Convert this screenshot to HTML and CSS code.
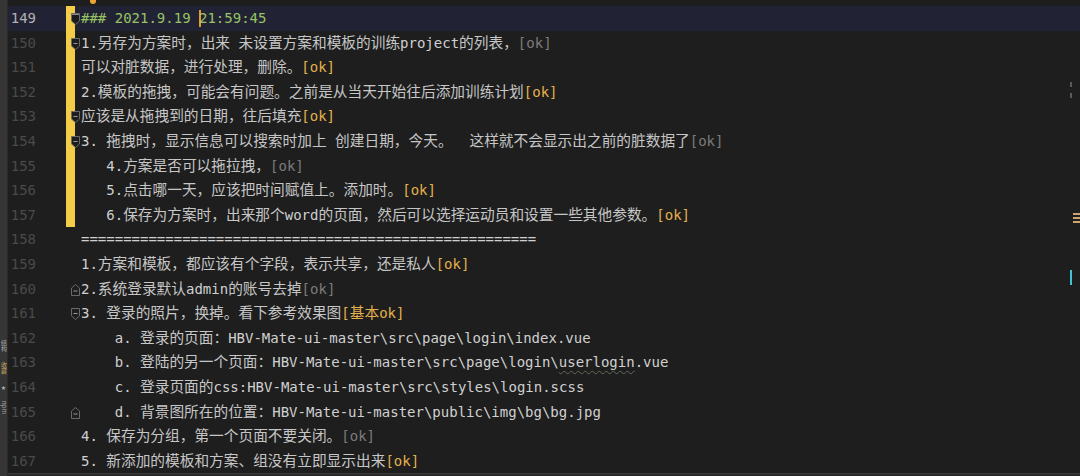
FILE: index.html
```html
<!DOCTYPE html>
<html>
<head>
<meta charset="utf-8">
<link rel="stylesheet" href="styles.css">
</head>
<body>
<div class="app">
  <div class="strip">
    <span class="tw">结构</span>
    <span class="tw fav">收藏</span>
    <span class="star">★</span>
    <span class="tw">npm</span>
  </div>
  <div class="editor">
    <div class="top"><span class="bulb"></span></div>
    <div class="row cur chg"><span class="num">149</span><span class="gut"><svg class="fd" viewBox="0 0 9 12"><path d="M0.5 0.5H8.5V8L4.5 11.5L0.5 8Z" fill="#1c1c1c" stroke="#6a6a6a"/><path d="M1 1.5H8" stroke="#8a8a8a"/></svg></span><span class="txt h">### 2021.9.19 <i class="caret"></i>21:59:45</span></div>
    <div class="row chg"><span class="num">150</span><span class="gut"><svg class="fd" viewBox="0 0 9 12"><path d="M0.5 0.5H8.5V8L4.5 11.5L0.5 8Z" fill="#1e1e1e" stroke="#6a6a6a"/><path d="M2.5 5.5H6.5" stroke="#9a9a9a"/></svg></span><span class="txt">1.<span class="z">另存为方案时，出来</span> <span class="z">未设置方案和模板的训练</span>project<span class="z">的列表，</span><span class="g">[ok]</span></span></div>
    <div class="row chg"><span class="num">151</span><span class="gut"></span><span class="txt"><span class="z">可以对脏数据，进行处理，删除。</span><span class="y">[ok]</span></span></div>
    <div class="row chg"><span class="num">152</span><span class="gut"></span><span class="txt">2.<span class="z">模板的拖拽，可能会有问题。之前是从当天开始往后添加训练计划</span><span class="y">[ok]</span></span></div>
    <div class="row chg"><span class="num">153</span><span class="gut"><svg class="fd" viewBox="0 0 9 12"><path d="M0.5 0.5H8.5V8L4.5 11.5L0.5 8Z" fill="#1e1e1e" stroke="#6a6a6a"/><path d="M2.5 5.5H6.5" stroke="#9a9a9a"/></svg></span><span class="txt"><span class="z">应该是从拖拽到的日期，往后填充</span><span class="y">[ok]</span></span></div>
    <div class="row chg"><span class="num">154</span><span class="gut"><svg class="fd" viewBox="0 0 9 12"><path d="M0.5 0.5H8.5V8L4.5 11.5L0.5 8Z" fill="#1e1e1e" stroke="#6a6a6a"/><path d="M2.5 5.5H6.5" stroke="#9a9a9a"/></svg></span><span class="txt">3. <span class="z">拖拽时，显示信息可以搜索时加上</span> <span class="z">创建日期，今天。</span>  <span class="z">这样就不会显示出之前的脏数据了</span><span class="g">[ok]</span></span></div>
    <div class="row chg"><span class="num">155</span><span class="gut"></span><span class="txt">   4.<span class="z">方案是否可以拖拉拽，</span><span class="g">[ok]</span></span></div>
    <div class="row chg"><span class="num">156</span><span class="gut"></span><span class="txt">   5.<span class="z">点击哪一天，应该把时间赋值上。添加时。</span><span class="y">[ok]</span></span></div>
    <div class="row chg"><span class="num">157</span><span class="gut"></span><span class="txt">   6.<span class="z">保存为方案时，出来那个</span>word<span class="z">的页面，然后可以选择运动员和设置一些其他参数。</span><span class="y">[ok]</span></span></div>
    <div class="row"><span class="num">158</span><span class="gut"></span><span class="txt">======================================================</span></div>
    <div class="row"><span class="num">159</span><span class="gut"></span><span class="txt">1.<span class="z">方案和模板，都应该有个字段，表示共享，还是私人</span><span class="y">[ok]</span></span></div>
    <div class="row"><span class="num">160</span><span class="gut"><svg class="fd" viewBox="0 0 9 12"><path d="M0.5 11.5H8.5V4L4.5 0.5L0.5 4Z" fill="#1e1e1e" stroke="#6a6a6a"/><path d="M2.5 7H6.5" stroke="#9a9a9a"/></svg></span><span class="txt">2.<span class="z">系统登录默认</span>admin<span class="z">的账号去掉</span><span class="g">[ok]</span></span></div>
    <div class="row"><span class="num">161</span><span class="gut"><svg class="fd" viewBox="0 0 9 12"><path d="M0.5 0.5H8.5V8L4.5 11.5L0.5 8Z" fill="#1e1e1e" stroke="#6a6a6a"/><path d="M2.5 5.5H6.5" stroke="#9a9a9a"/></svg></span><span class="txt">3. <span class="z">登录的照片，换掉。看下参考效果图</span><span class="y">[<span class="z">基本</span>ok]</span></span></div>
    <div class="row"><span class="num">162</span><span class="gut"></span><span class="txt">    a. <span class="z">登录的页面：</span>HBV-Mate-ui-master\src\page\login\index.vue</span></div>
    <div class="row"><span class="num">163</span><span class="gut"></span><span class="txt">    b. <span class="z">登陆的另一个页面：</span>HBV-Mate-ui-master\src\page\login\<span class="sp">userlogin</span>.vue</span></div>
    <div class="row"><span class="num">164</span><span class="gut"></span><span class="txt">    c. <span class="z">登录页面的</span>css:HBV-Mate-ui-master\src\styles\login.scss</span></div>
    <div class="row"><span class="num">165</span><span class="gut"><svg class="fd" viewBox="0 0 9 12"><path d="M0.5 11.5H8.5V4L4.5 0.5L0.5 4Z" fill="#1e1e1e" stroke="#6a6a6a"/><path d="M2.5 7H6.5" stroke="#9a9a9a"/></svg></span><span class="txt">    d. <span class="z">背景图所在的位置：</span>HBV-Mate-ui-master\public\img\bg\bg.jpg</span></div>
    <div class="row"><span class="num">166</span><span class="gut"></span><span class="txt">4. <span class="z">保存为分组，第一个页面不要关闭。</span><span class="g">[ok]</span></span></div>
    <div class="row"><span class="num">167</span><span class="gut"></span><span class="txt">5. <span class="z">新添加的模板和方案、组没有立即显示出来</span><span class="y">[ok]</span></span></div>
    <div class="foot"></div>
    <span class="mk m1"></span>
    <span class="mk m2"></span>
    <span class="tan"><i></i><i></i><i></i></span>
    <span class="cyan"></span>
  </div>
</div>
</body>
</html>
```
FILE: styles.css
```css
html, body {
  margin: 0;
  padding: 0;
}
body {
  width: 1080px;
  height: 476px;
  overflow: hidden;
  background: #1e1e1e;
  font-family: "DejaVu Sans Mono", "Noto Sans CJK SC", monospace;
  font-size: 14px;
}
.app {
  display: flex;
  height: 476px;
}
.strip {
  width: 7px;
  flex: none;
  background: #353535;
  border-right: 1px solid #2a2a2a;
  display: flex;
  flex-direction: column;
  align-items: center;
  overflow: hidden;
  padding-top: 340px;
  gap: 10px;
}
.tw {
  writing-mode: vertical-rl;
  font-family: "Noto Sans CJK SC", sans-serif;
  font-size: 6px;
  line-height: 6px;
  color: #a8a8a8;
  white-space: nowrap;
}
.tw.fav {
  color: #c9a460;
}
.star {
  font-family: "DejaVu Sans", sans-serif;
  font-size: 6px;
  line-height: 7px;
  color: #b0b0b0;
}
.editor {
  flex: 1;
  position: relative;
  display: flex;
  flex-direction: column;
  background: #1e1e1e;
}
.top {
  height: 6px;
  flex: none;
  position: relative;
}
.bulb {
  position: absolute;
  left: 82px;
  top: -3px;
  width: 6px;
  height: 7px;
  border-radius: 3px;
  background: #eda434;
}
.row {
  display: flex;
  height: 24.6px;
  line-height: 24.6px;
  flex: none;
}
.row.cur {
  background: #222235;
}
.num {
  width: 58px;
  flex: none;
  box-sizing: border-box;
  padding-right: 30px;
  text-align: right;
  color: #4a4a4a;
}
.cur .num {
  color: #b2b2b2;
}
.gut {
  width: 15px;
  flex: none;
  position: relative;
}
.chg .gut::before {
  content: "";
  position: absolute;
  left: 0;
  top: 0;
  bottom: 0;
  width: 9px;
  background: #f4cd48;
}
.fd {
  position: absolute;
  left: 5px;
  top: 7px;
  width: 9px;
  height: 12px;
}
.txt {
  white-space: pre;
  color: #d0d0d0;
}
.z {
  font-size: 14.7px;
  color: #c6c6c6;
}
.h {
  color: #98c263;
}
.g {
  color: #7b7b7b;
}
.y {
  color: #e3b14c;
}
.y .z {
  color: #e3b14c;
}
.caret {
  display: inline-block;
  width: 2px;
  height: 17px;
  margin-right: -2px;
  vertical-align: -4px;
  background: #e39c2c;
}
.sp {
  text-decoration: underline wavy #5f6a58;
  text-underline-offset: 3px;
  text-decoration-thickness: 1px;
}
.foot {
  flex: 1;
  background: #2b2b2b;
  border-top: 1px solid #3a3a3a;
}
.mk {
  position: absolute;
  left: 1062px;
  width: 2px;
  height: 5px;
  background: #5a5a5a;
}
.m1 { top: 82px; }
.m2 { top: 93px; }
.tan {
  position: absolute;
  left: 1065px;
  top: 213px;
  width: 7px;
  display: flex;
  flex-direction: column;
  gap: 2px;
}
.tan i {
  display: block;
  height: 2px;
  background: #d0a56c;
}
.cyan {
  position: absolute;
  left: 1062px;
  top: 270px;
  width: 2px;
  height: 15px;
  background: #3fc3d5;
}
```
